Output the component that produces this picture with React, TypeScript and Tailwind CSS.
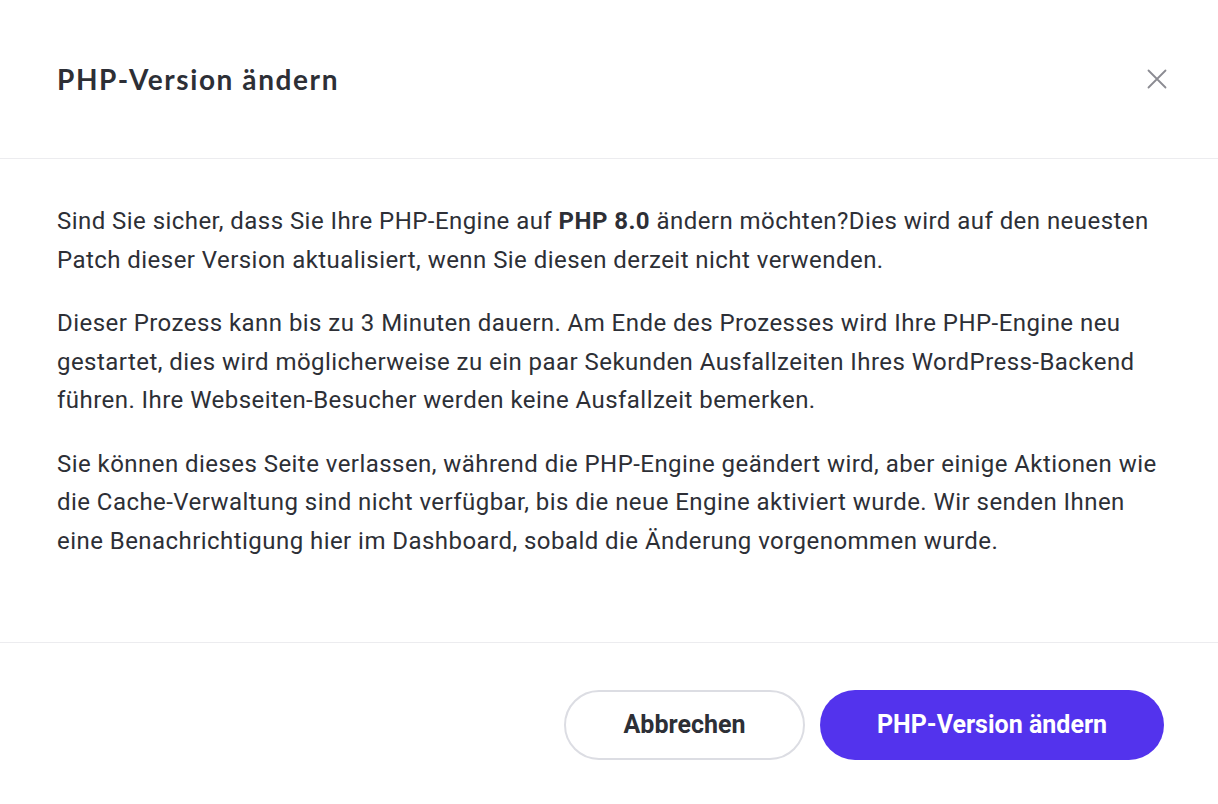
import React from "react";

const CloseIcon = () => (
  <svg width="20" height="20" viewBox="0 0 20 20" fill="none" stroke="currentColor" strokeWidth="1.8" strokeLinecap="round">
    <path d="M1.5 1.5 L18.5 18.5 M18.5 1.5 L1.5 18.5" />
  </svg>
);

const App = () => {
  return (
    <div className="w-[1218px] h-[804px] bg-white flex flex-col text-[#2d2f36] font-['Roboto',sans-serif]">
      {/* Header */}
      <div className="h-[159px] shrink-0 flex items-center justify-between pl-[57px] pr-[51px] border-b border-[#ececef]">
        <h2 className="text-[28px] font-bold font-['Lato',sans-serif] tracking-[1.6px] text-[#2d2f36]">
          PHP-Version ändern
        </h2>
        <button className="text-[#8b8b92]">
          <CloseIcon />
        </button>
      </div>

      {/* Body */}
      <div className="flex-1 pl-[57px] pr-[48px] pt-[43px] space-y-[25px] text-[24px] leading-[38.5px] tracking-[0.45px]">
        <p>
          Sind Sie sicher, dass Sie Ihre PHP-Engine auf <span className="font-bold">PHP 8.0</span> ändern möchten?Dies wird auf den neuesten Patch dieser Version aktualisiert, wenn Sie diesen derzeit nicht verwenden.
        </p>
        <p>
          Dieser Prozess kann bis zu 3 Minuten dauern. Am Ende des Prozesses wird Ihre PHP-Engine neu gestartet, dies wird möglicherweise zu ein paar Sekunden Ausfallzeiten Ihres WordPress-Backend führen. Ihre Webseiten-Besucher werden keine Ausfallzeit bemerken.
        </p>
        <p>
          Sie können dieses Seite verlassen, während die PHP-Engine geändert wird, aber einige Aktionen wie die Cache-Verwaltung sind nicht verfügbar, bis die neue Engine aktiviert wurde. Wir senden Ihnen eine Benachrichtigung hier im Dashboard, sobald die Änderung vorgenommen wurde.
        </p>
      </div>

      {/* Footer */}
      <div className="h-[162px] shrink-0 border-t border-[#ececef] flex items-center justify-end gap-[15px] pr-[54px] pt-[2px]">
        <button className="w-[241px] h-[70px] rounded-full border-2 border-[#dcdde3] bg-white text-[25px] font-bold text-[#2d2f36]">
          Abbrechen
        </button>
        <button className="w-[344px] h-[70px] rounded-full bg-[#5333ed] text-[25px] font-bold text-white">
          PHP-Version ändern
        </button>
      </div>
    </div>
  );
};

export default App;
